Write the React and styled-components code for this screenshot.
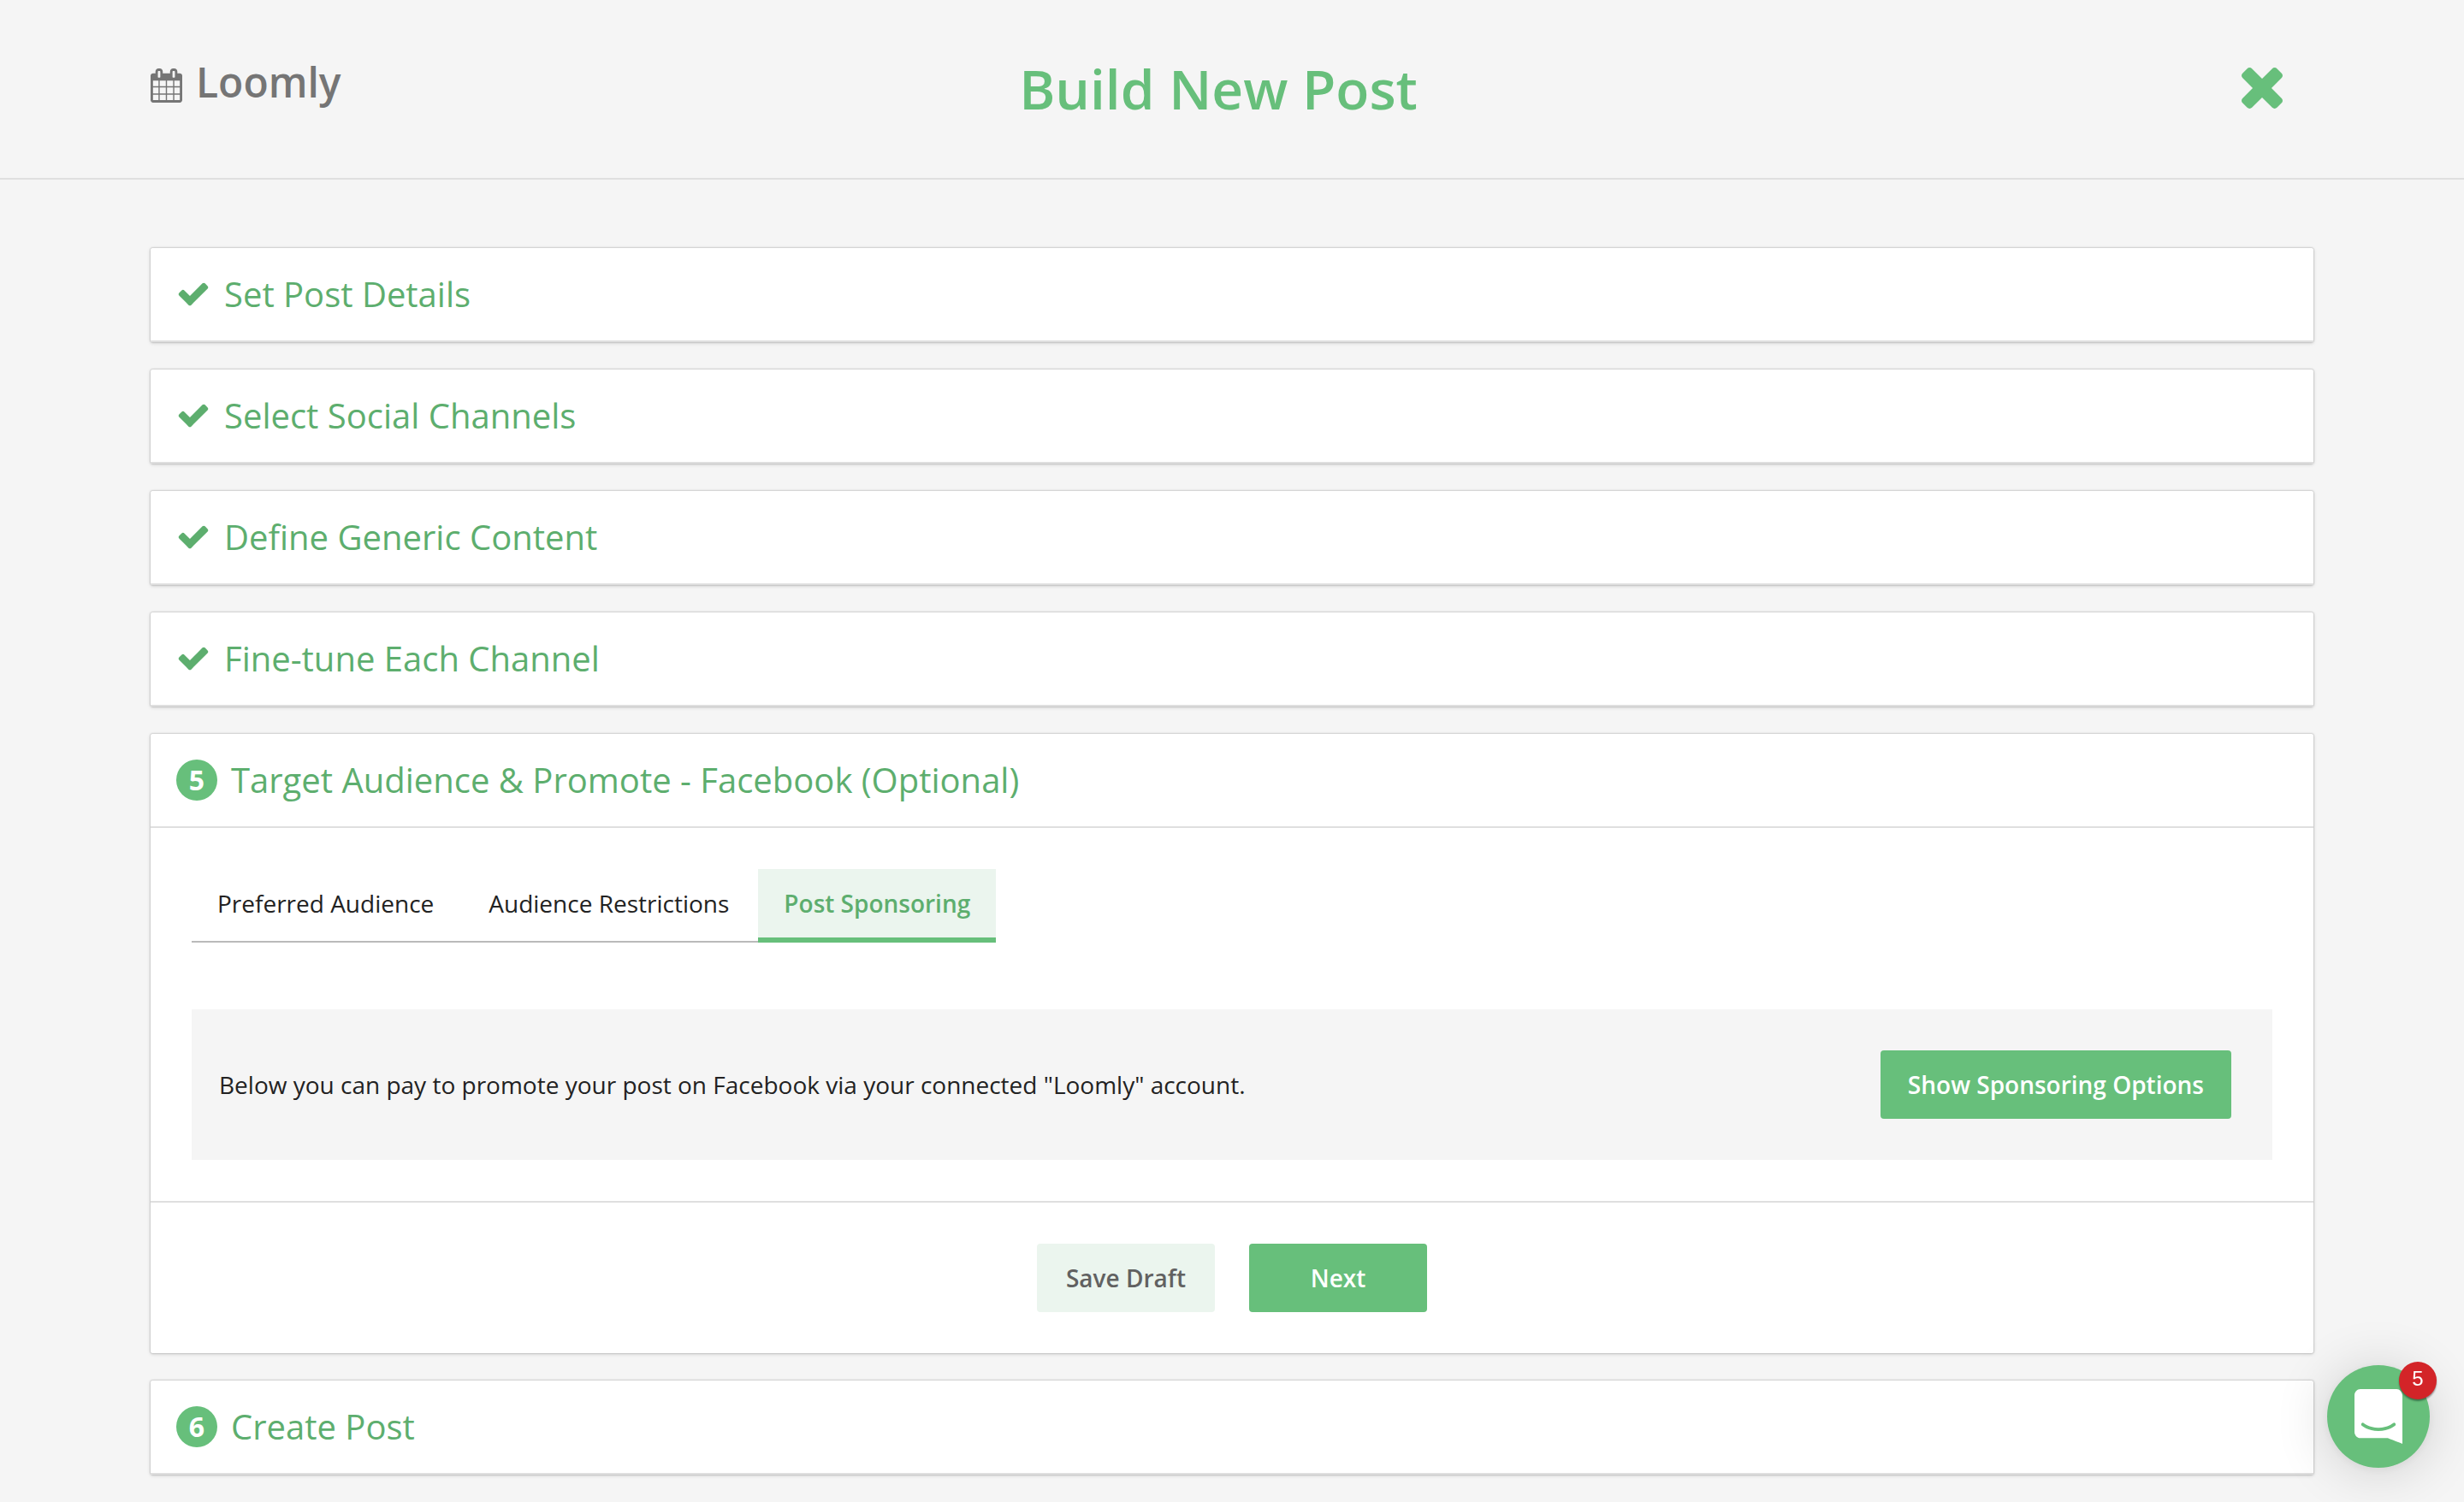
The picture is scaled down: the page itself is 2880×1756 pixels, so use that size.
import React, { useState } from 'react'
import styled, { createGlobalStyle } from 'styled-components'

const green = '#67bf7b'
const greenText = '#5dae6e'
const greenLight = '#ebf5ee'
const line = '#dfdfdf'

const GlobalStyle = createGlobalStyle`
* { box-sizing: border-box; }

body {
  margin: 0;
  background: #f5f5f5;
  color: #222;
  font-family: 'Open Sans', 'Noto Sans', sans-serif;
  font-size: 28px;
  line-height: 40px;
}

h1, h2, p { margin: 0; }

button {
  border: 0;
  font: inherit;
  cursor: pointer;
}
`

// Header

const Header = styled.header`
  display: grid;
  grid-template-columns: 1fr auto 1fr;
  align-items: start;
  padding: 40px 208px 40px 176px;
  border-bottom: 2px solid ${line};
`

const Logo = styled.a`
  justify-self: start;
  color: #757575;
  font-size: 48px;
  font-weight: 600;
  line-height: 112px;
  text-decoration: none;

  svg {
    margin-right: 16px;
    vertical-align: -6px;
  }
`

const Title = styled.h1`
  color: ${green};
  font-size: 64px;
  font-weight: 600;
  line-height: 128px;
`

const Close = styled.button`
  display: flex;
  align-items: center;
  justify-self: end;
  height: 126px;
  padding: 0 4px;
  background: none;
  color: ${green};
`

// Steps

const Steps = styled.main`
  display: flex;
  flex-direction: column;
  gap: 32px;
  padding: 80px 176px 32px;
`

const Card = styled.section`
  background: #fff;
  border-radius: 2px;
  box-shadow: 0 1px 4px rgba(0, 0, 0, 0.16), 0 0 2px rgba(0, 0, 0, 0.36);
`

const StepButton = styled.button`
  display: flex;
  align-items: center;
  gap: 16px;
  width: 100%;
  height: 110px;
  padding: 0 30px;
  background: none;
  border-bottom: 2px solid ${line};
  color: ${greenText};
  font-size: 40px;
  font-weight: 400;
  line-height: 52px;
  text-align: left;
`

const StepNumber = styled.span`
  width: 48px;
  border-radius: 50%;
  background: ${green};
  color: #fff;
  font-size: 32px;
  font-weight: 700;
  line-height: 48px;
  text-align: center;
`

const StepBody = styled.div`
  padding: 48px;
`

const Tabs = styled.div`
  display: flex;
  gap: 4px;
  width: max-content;
  margin-bottom: 78px;
  box-shadow: inset 0 -2px #bababa;
`

const Tab = styled.button`
  height: 86px;
  padding: 0 30px;
  background: ${p => (p.$active ? greenLight : 'none')};
  border-bottom: 6px solid ${p => (p.$active ? green : 'transparent')};
  color: ${p => (p.$active ? greenText : '#222')};
  font-weight: ${p => (p.$active ? 600 : 400)};
`

const Notice = styled.div`
  display: flex;
  align-items: center;
  justify-content: space-between;
  padding: 48px 48px 48px 32px;
  background: #f5f5f5;
`

const Button = styled.button`
  min-width: 208px;
  height: 80px;
  padding: 0 32px;
  border-radius: 4px;
  background: ${p => (p.$light ? greenLight : green)};
  color: ${p => (p.$light ? '#616161' : '#fff')};
  font-weight: 600;
`

const StepFooter = styled.footer`
  display: flex;
  justify-content: center;
  gap: 40px;
  padding: 48px;
  border-top: 2px solid ${line};
`

// Chat launcher

const Launcher = styled.button`
  position: fixed;
  right: 40px;
  bottom: 40px;
  display: flex;
  align-items: center;
  justify-content: center;
  width: 120px;
  height: 120px;
  padding: 0;
  border-radius: 50%;
  background: ${green};
  box-shadow: 0 2px 12px rgba(0, 0, 0, 0.06), 0 4px 64px rgba(0, 0, 0, 0.16);
`

const Unread = styled.span`
  position: absolute;
  top: -4px;
  right: -8px;
  width: 44px;
  height: 44px;
  border-radius: 50%;
  background: #d32428;
  box-shadow: 0 2px 2px rgba(0, 0, 0, 0.4);
  color: #fff;
  font-family: 'Liberation Sans', sans-serif;
  font-size: 24px;
  line-height: 40px;
  text-align: center;
`

const CalendarIcon = () => (
  <svg width="37" height="40" viewBox="64 0 1664 1792" fill="currentColor" aria-hidden="true">
    <path d="M192 1664h288v-288h-288v288zm352 0h320v-288h-320v288zm-352-352h288v-320h-288v320zm352 0h320v-320h-320v320zm-352-384h288v-288h-288v288zm736 736h320v-288h-320v288zm-384-736h320v-288h-320v288zm768 736h288v-288h-288v288zm-384-352h320v-320h-320v320zm-352-864v-288q0-13-9.5-22.5t-22.5-9.5h-64q-13 0-22.5 9.5t-9.5 22.5v288q0 13 9.5 22.5t22.5 9.5h64q13 0 22.5-9.5t9.5-22.5zm736 864h288v-320h-288v320zm-384-384h320v-288h-320v288zm384 0h288v-288h-288v288zm32-480v-288q0-13-9.5-22.5t-22.5-9.5h-64q-13 0-22.5 9.5t-9.5 22.5v288q0 13 9.5 22.5t22.5 9.5h64q13 0 22.5-9.5t9.5-22.5zm384-64v1280q0 52-38 90t-90 38h-1408q-52 0-90-38t-38-90v-1280q0-52 38-90t90-38h128v-96q0-66 47-113t113-47h64q66 0 113 47t47 113v96h384v-96q0-66 47-113t113-47h64q66 0 113 47t47 113v96h128q52 0 90 38t38 90z" />
  </svg>
)

const TimesIcon = () => (
  <svg width="48" height="48" viewBox="302 366 1188 1188" fill="currentColor" aria-hidden="true">
    <path d="M1490 1322q0 40-28 68l-136 136q-28 28-68 28t-68-28l-294-294-294 294q-28 28-68 28t-68-28l-136-136q-28-28-28-68t28-68l294-294-294-294q-28-28-28-68t28-68l136-136q28-28 68-28t68 28l294 294 294-294q28-28 68-28t68 28l136 136q28 28 28 68t-28 68l-294 294 294 294q28 28 28 68z" />
  </svg>
)

const CheckIcon = () => (
  <svg width="40" height="40" viewBox="0 32 1792 1792" fill="currentColor" aria-hidden="true">
    <path d="M1671 566q0 40-28 68l-724 724-136 136q-28 28-68 28t-68-28l-136-136-362-362q-28-28-28-68t28-68l136-136q28-28 68-28t68 28l294 295 656-657q28-28 68-28t68 28l136 136q28 28 28 68z" />
  </svg>
)

const ChatIcon = () => (
  <svg width="56" height="64" viewBox="0 0 28 32" fill="#fff" aria-hidden="true">
    <path d="M28 32s-4.714-1.855-8.527-3.34H3.437C1.54 28.66 0 27.026 0 25.013V3.644C0 1.633 1.54 0 3.437 0h21.125c1.898 0 3.437 1.632 3.437 3.645v18.404H28V32zm-4.139-11.982a.88.88 0 00-1.292-.105c-.03.026-3.015 2.681-8.57 2.681-5.486 0-8.517-2.636-8.571-2.684a.88.88 0 00-1.29.107 1.01 1.01 0 00-.219.708.992.992 0 00.318.664c.142.128 3.537 3.15 9.762 3.15 6.226 0 9.621-3.022 9.763-3.15a.992.992 0 00.317-.664 1.01 1.01 0 00-.218-.707z" />
  </svg>
)

const Step = ({ number, title, children }) => (
  <Card>
    <h2>
      <StepButton type="button">
        {number ? <StepNumber>{number}</StepNumber> : <CheckIcon />}
        <span>{title}</span>
      </StepButton>
    </h2>
    {children}
  </Card>
)

const doneSteps = [
  'Set Post Details',
  'Select Social Channels',
  'Define Generic Content',
  'Fine-tune Each Channel',
]

const tabs = ['Preferred Audience', 'Audience Restrictions', 'Post Sponsoring']

const App = () => {
  const [tab, setTab] = useState('Post Sponsoring')

  return (
    <>
      <GlobalStyle />

      <Header>
        <Logo href="#">
          <CalendarIcon />
          Loomly
        </Logo>
        <Title>Build New Post</Title>
        <Close type="button" aria-label="Close">
          <TimesIcon />
        </Close>
      </Header>

      <Steps>
        {doneSteps.map(title => <Step key={title} title={title} />)}

        <Step number={5} title="Target Audience & Promote - Facebook (Optional)">
          <StepBody>
            <Tabs role="tablist">
              {tabs.map(name => (
                <Tab
                  key={name}
                  type="button"
                  role="tab"
                  aria-selected={name === tab}
                  $active={name === tab}
                  onClick={() => setTab(name)}
                >
                  {name}
                </Tab>
              ))}
            </Tabs>
            <Notice>
              <p>Below you can pay to promote your post on Facebook via your connected "Loomly" account.</p>
              <Button type="button">Show Sponsoring Options</Button>
            </Notice>
          </StepBody>
          <StepFooter>
            <Button type="button" $light>Save Draft</Button>
            <Button type="button">Next</Button>
          </StepFooter>
        </Step>

        <Step number={6} title="Create Post" />
      </Steps>

      <Launcher type="button" aria-label="Open chat, 5 unread">
        <ChatIcon />
        <Unread>5</Unread>
      </Launcher>
    </>
  )
}

export default App
